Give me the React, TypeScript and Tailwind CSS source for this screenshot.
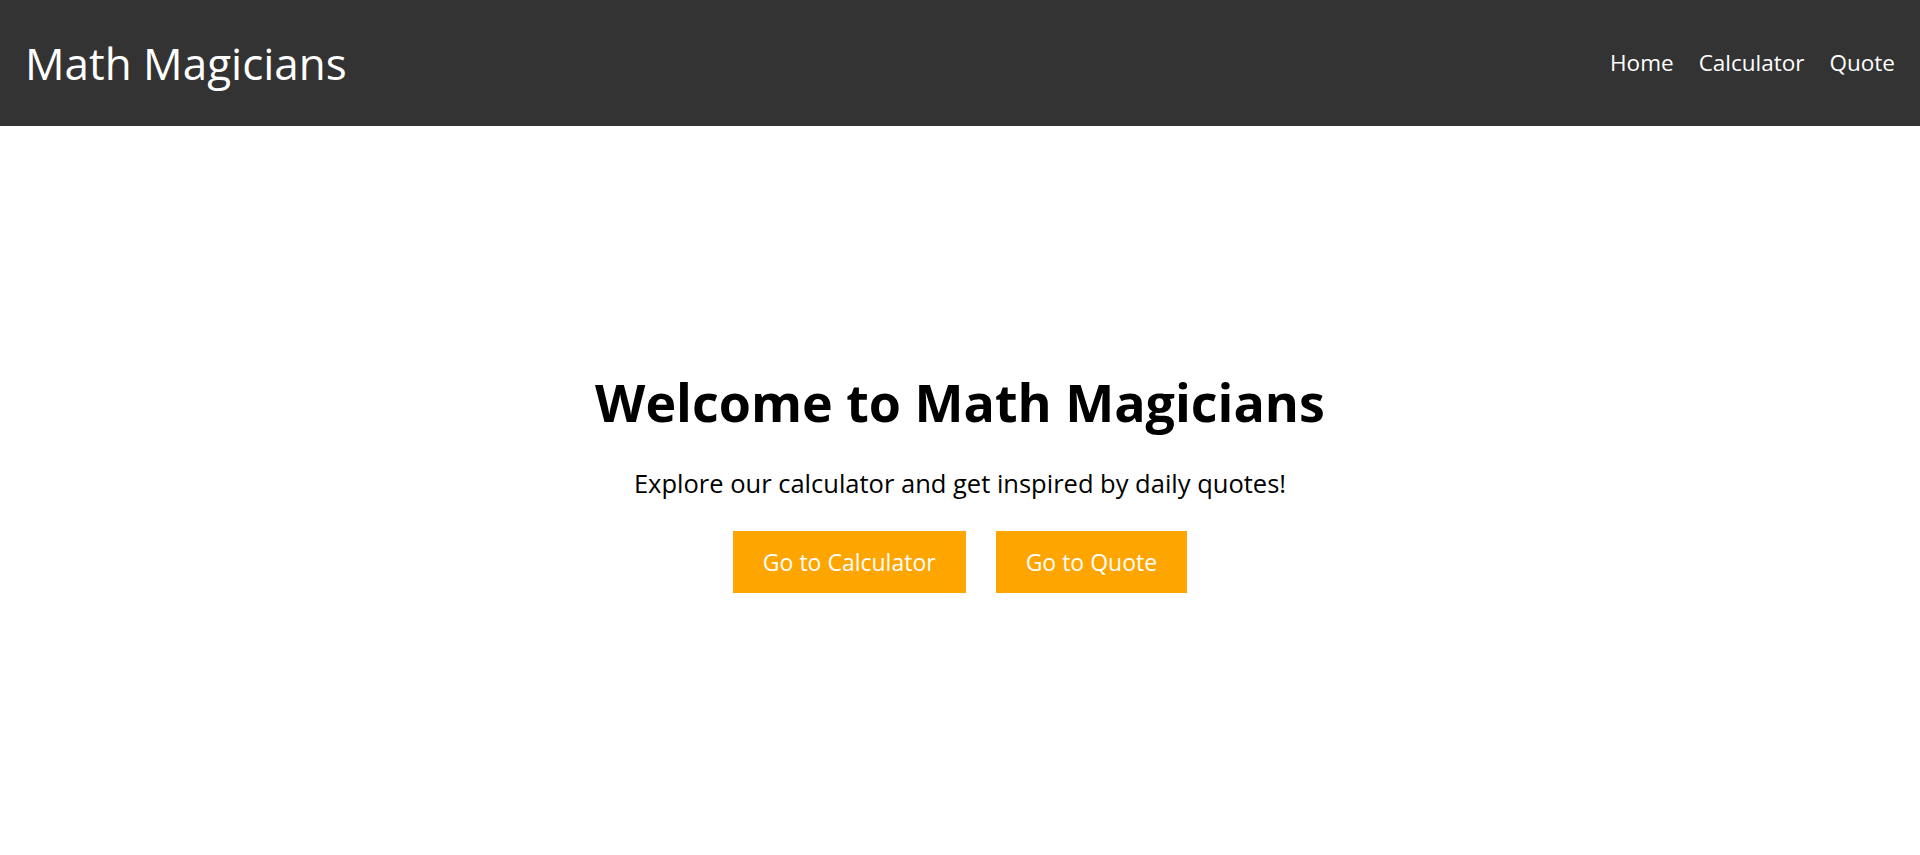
export default function App() {
  return (
    <div className="min-h-screen bg-white flex flex-col font-['Open_Sans',sans-serif]">
      <header className="h-[126px] bg-[#333333] flex items-center justify-between px-[25px]">
        <h1 className="text-white text-[44px] leading-none">Math Magicians</h1>
        <nav className="flex gap-[25px] text-white text-[22.5px]">
          <a href="#">Home</a>
          <a href="#">Calculator</a>
          <a href="#">Quote</a>
        </nav>
      </header>

      <main className="flex-1 flex flex-col items-center justify-center pb-[17px]">
        <h2 className="text-black text-[52px] font-bold leading-[62px]">Welcome to Math Magicians</h2>
        <p className="text-black text-[25.5px] leading-[34px] mt-[33px]">
          Explore our calculator and get inspired by daily quotes!
        </p>
        <div className="flex gap-[30px] mt-[31px]">
          <button className="h-[62px] px-[30px] bg-[#ffa500] text-white text-[23px]">Go to Calculator</button>
          <button className="h-[62px] px-[30px] bg-[#ffa500] text-white text-[23px]">Go to Quote</button>
        </div>
      </main>
    </div>
  );
}
